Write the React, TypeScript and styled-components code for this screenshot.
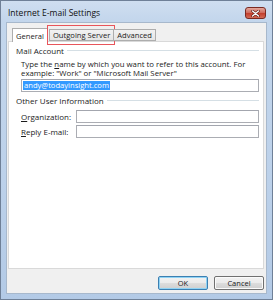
import React from 'react';
import styled, { createGlobalStyle } from 'styled-components';

const GlobalStyle = createGlobalStyle`
  html, body {
    margin: 0;
    padding: 0;
    overflow: hidden;
    background: #ffffff;
  }

  body {
    font-family: 'Open Sans', 'Noto Sans', sans-serif;
    color: #1b1b1b;
  }
`;

const Window = styled.div`
  box-sizing: border-box;
  width: 273px;
  height: 300px;
  display: flex;
  flex-direction: column;
  padding: 0 5px 5px;
  border: 1px solid #6f8097;
  background: linear-gradient(to bottom, #cfdef0 0, #c3d6ec 20px, #bcd1ea 60%, #b3cae6 100%);
`;

const TitleBar = styled.div`
  height: 21px;
  flex: none;
  display: flex;
  align-items: center;
  justify-content: space-between;
  padding: 0 1px 0 2px;
`;

const Title = styled.span`
  font-size: 8.5px;
  color: #101010;
  padding-top: 2px;
`;

const CloseButton = styled.div`
  box-sizing: border-box;
  width: 21px;
  height: 12px;
  margin-top: 3px;
  border: 1px solid #7a2a22;
  border-radius: 3px;
  background: linear-gradient(to bottom, #e3a89d 0, #d06d5f 45%, #c3402f 55%, #d26a55 100%);
  display: flex;
  align-items: center;
  justify-content: center;
`;

const Client = styled.div`
  flex: 1;
  display: flex;
  flex-direction: column;
  padding: 4px 2px 3px 1px;
  border: 1px solid #a7b8cc;
  background: #f0f0f0;
`;

const TabRow = styled.div`
  height: 14px;
  display: flex;
  align-items: flex-end;
  padding-left: 4px;
  position: relative;
  z-index: 1;
`;

const Tab = styled.div<{ $active?: boolean; $gap?: number }>`
  box-sizing: border-box;
  height: ${p => (p.$active ? 14 : 12)}px;
  margin-left: ${p => p.$gap ?? 0}px;
  padding: 0 3px;
  display: flex;
  align-items: center;
  font-size: 7.6px;
  border: 1px solid #adadad;
  border-bottom: ${p => (p.$active ? 'none' : '1px solid #adadad')};
  background: ${p => (p.$active ? '#ffffff' : 'linear-gradient(to bottom, #f2f2f2, #e5e5e5)')};
  margin-bottom: ${p => (p.$active ? -1 : 0)}px;
  position: relative;
`;

const Highlight = styled.div`
  position: absolute;
  left: -3px;
  right: -2px;
  top: -5px;
  bottom: -5px;
  border: 1px solid #e8555b;
  pointer-events: none;
`;

const Panel = styled.div`
  flex: 1;
  background: #ffffff;
  border: 1px solid #d9d9d9;
  padding: 3px 4px 0 7px;
`;

const Group = styled.div`
  margin-bottom: 3px;
`;

const GroupTitle = styled.div`
  display: flex;
  align-items: center;
  gap: 3px;
  font-size: 8px;
  height: 10px;

  &::after {
    content: '';
    flex: 1;
    height: 1px;
    background: #d5dfe5;
  }
`;

const GroupBody = styled.div`
  padding: 5px 0 0 5px;
`;

const Description = styled.p`
  margin: 0;
  font-size: 7.8px;
  line-height: 8.5px;
`;

const TextBox = styled.div`
  box-sizing: border-box;
  height: 13px;
  flex: 1;
  border: 1px solid #abadb3;
  border-top-color: #a3a6ae;
  background: #ffffff;
  display: flex;
  align-items: center;
  padding-left: 1px;
`;

const Selected = styled.span`
  background: #3399ff;
  color: #ffffff;
  font-size: 7.6px;
  line-height: 9px;
  padding: 0 1px;
`;

const FieldRow = styled.div<{ $top?: number }>`
  display: flex;
  align-items: center;
  height: 13px;
  margin-top: ${p => p.$top ?? 0}px;
  margin-bottom: 2px;
`;

const FieldLabel = styled.label`
  width: 55px;
  font-size: 8px;
`;

const Footer = styled.div`
  display: flex;
  justify-content: flex-end;
  gap: 6px;
  padding-top: 7px;
`;

const Button = styled.button<{ $default?: boolean }>`
  box-sizing: border-box;
  width: 50px;
  height: 14px;
  padding: 0;
  font-family: inherit;
  font-size: 7.5px;
  color: #1b1b1b;
  border-radius: 2px;
  border: 1px solid ${p => (p.$default ? '#3c7fb1' : '#707070')};
  box-shadow: inset 0 0 0 1px ${p => (p.$default ? '#8fd3f5' : '#fbfbfb')};
  background: linear-gradient(to bottom, #f2f2f2 0, #ebebeb 50%, #dddddd 51%, #cfcfcf 100%);
`;

function CloseGlyph () {
  return (
    <svg width='9' height='7' viewBox='0 0 9 7'>
      <path d='M1.5 1 L7.5 6 M7.5 1 L1.5 6' stroke='#5a1a14' strokeWidth='2.6' strokeLinecap='round' />
      <path d='M1.5 1 L7.5 6 M7.5 1 L1.5 6' stroke='#ffffff' strokeWidth='1.4' strokeLinecap='round' />
    </svg>
  );
}

export default function App () {
  return (
    <>
      <GlobalStyle />
      <Window>
        <TitleBar>
          <Title>Internet E-mail Settings</Title>
          <CloseButton><CloseGlyph /></CloseButton>
        </TitleBar>
        <Client>
          <TabRow>
            <Tab $active>General</Tab>
            <Tab $gap={1}>
              Outgoing Server
              <Highlight />
            </Tab>
            <Tab $gap={-1}>Advanced</Tab>
          </TabRow>
          <Panel>
            <Group>
              <GroupTitle>Mail Account</GroupTitle>
              <GroupBody>
                <Description>
                  Type the <u>n</u>ame by which you want to refer to this account. For
                  <br />
                  example: &quot;Work&quot; or &quot;Microsoft Mail Server&quot;
                </Description>
                <FieldRow $top={2}>
                  <TextBox><Selected>andy@todayinsight.com</Selected></TextBox>
                </FieldRow>
              </GroupBody>
            </Group>
            <Group>
              <GroupTitle>Other User Information</GroupTitle>
              <GroupBody>
                <FieldRow>
                  <FieldLabel><u>O</u>rganization:</FieldLabel>
                  <TextBox />
                </FieldRow>
                <FieldRow>
                  <FieldLabel><u>R</u>eply E-mail:</FieldLabel>
                  <TextBox />
                </FieldRow>
              </GroupBody>
            </Group>
          </Panel>
          <Footer>
            <Button $default>OK</Button>
            <Button>Cancel</Button>
          </Footer>
        </Client>
      </Window>
    </>
  );
}
